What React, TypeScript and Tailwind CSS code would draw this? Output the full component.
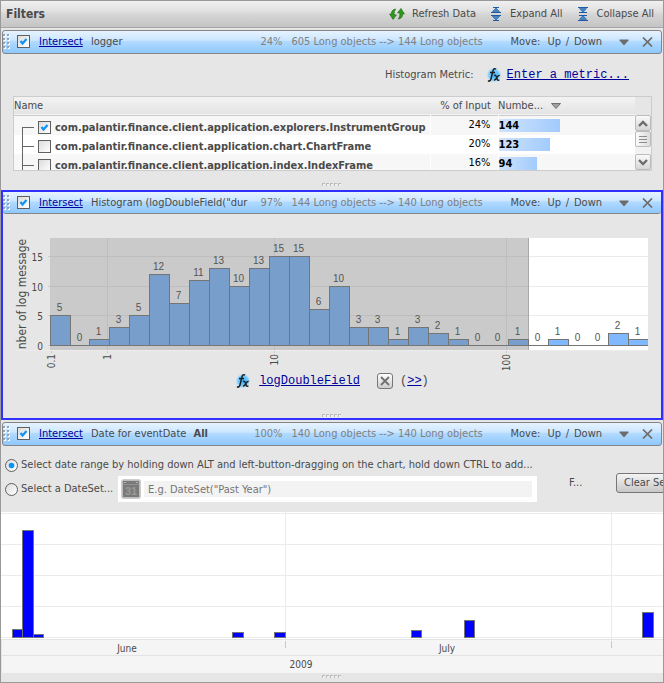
import type { ReactNode } from "react";

const LABEL_FONT = "DejaVu Sans Condensed";

function CheckBox({ label, checked = false }: { label: string; checked?: boolean }) {
  return (
    <span className="relative block size-[13px] shrink-0">
      <input
        type="checkbox"
        aria-label={label}
        defaultChecked={checked}
        className="peer block size-[13px] appearance-none border border-[#5f5f5f] bg-linear-to-br from-[#dcdcdc] to-white"
      />
      <svg
        className="pointer-events-none absolute inset-0 hidden peer-checked:block"
        width="13"
        height="13"
        viewBox="0 0 13 13"
        fill="none"
      >
        <path d="M3.5 6 L5.5 8.5 L9.5 4" stroke="#0b93f5" strokeWidth="2.2" />
      </svg>
    </span>
  );
}

function Radio({ id, checked = false }: { id: string; checked?: boolean }) {
  return (
    <span className="relative block size-[13px] shrink-0">
      <input
        id={id}
        type="radio"
        name="date-mode"
        defaultChecked={checked}
        className="peer block size-[13px] appearance-none rounded-full border border-[#5f5f5f] bg-linear-to-br from-[#dcdcdc] to-white"
      />
      <svg
        className="pointer-events-none absolute inset-0 hidden peer-checked:block"
        width="13"
        height="13"
        viewBox="0 0 13 13"
      >
        <circle cx="6.5" cy="6.5" r="2.8" fill="#0b93f5" />
      </svg>
    </span>
  );
}

function RefreshIcon() {
  return (
    <svg width="16" height="14" viewBox="0 0 16 14" className="shrink-0">
      <g fill="#2f9a1c" stroke="#17650d" strokeWidth="0.6">
        <path d="M6.6 2 Q2.4 2.6 2.4 7 L0.6 7 L4 12.4 L7.4 8 L5 7.6 Q4.8 4.6 6.6 2 Z" />
        <path d="M9.4 12 Q13.6 11.4 13.6 7 L15.4 7 L12 1.4 L8.6 5.8 L11 6.2 Q11.2 9.4 9.4 12 Z" />
      </g>
    </svg>
  );
}

function ExpandIcon() {
  return (
    <svg width="12" height="14" viewBox="0 0 12 14" className="shrink-0">
      <g fill="#3c8ad6" stroke="#1d4f94" strokeWidth="0.6">
        <path d="M6 1 L9.5 4.6 H2.5 Z" />
        <path d="M6 13 L9.5 9.4 H2.5 Z" />
      </g>
      <path d="M3 0.5 H9 M1 5.5 H11 M1 8.5 H11 M3 13.5 H9" stroke="#1f5aa6" strokeWidth="1" />
    </svg>
  );
}

function CollapseIcon() {
  return (
    <svg width="12" height="14" viewBox="0 0 12 14" className="shrink-0">
      <g fill="#3c8ad6" stroke="#1d4f94" strokeWidth="0.6">
        <path d="M6 5.4 L9.5 1.6 H2.5 Z" />
        <path d="M6 8.6 L9.5 12.4 H2.5 Z" />
      </g>
      <path d="M1 0.5 H11 M2 5.5 H10 M2 8.5 H10 M1 13.5 H11" stroke="#1f5aa6" strokeWidth="1" />
    </svg>
  );
}

function FxIcon() {
  return (
    <svg width="16" height="16" viewBox="0 0 16 16" className="shrink-0">
      <defs>
        <radialGradient id="fx-glow">
          <stop offset="0" stopColor="#35b0ff" />
          <stop offset="0.65" stopColor="#7cccff" />
          <stop offset="1" stopColor="#cfe6f5" stopOpacity="0" />
        </radialGradient>
      </defs>
      <circle cx="8" cy="8" r="8" fill="url(#fx-glow)" />
      <path
        d="M10 2.3 C8.6 0.9 7.3 2 6.8 4.4 L5 12 C4.5 14 3.2 14.6 2 13.7 M4 5.6 H9"
        fill="none"
        stroke="#1d1d1d"
        strokeWidth="1.5"
      />
      <path d="M8.2 8.6 Q9.6 7.6 10.2 9.4 L11.4 12.6 Q12 14 13.4 12.8 M13.6 8.2 Q12 8.4 10.8 10.6 Q9.4 13.4 8 13" fill="none" stroke="#1d1d1d" strokeWidth="1.4" />
    </svg>
  );
}

function CalendarIcon() {
  return (
    <svg width="20" height="20" viewBox="0 0 20 20" className="shrink-0">
      <rect x="0.5" y="0.5" width="19" height="19" rx="2" fill="#bdbdbd" stroke="#cccccc" />
      <rect x="2" y="2" width="16" height="16" fill="#7a7a7a" />
      <path d="M2 5.5 H18" stroke="#929292" />
      <path d="M3 3.5 H5 M15 3.5 H17" stroke="#b5b5b5" />
      <text x="10" y="16" textAnchor="middle" fontFamily="Liberation Sans" fontWeight="bold" fontSize="11" fill="#9a9a9a">
        31
      </text>
    </svg>
  );
}

function Grip() {
  return (
    <svg width="20" height="4" viewBox="0 0 20 4" className="mx-auto block" shapeRendering="crispEdges">
      {[0, 4, 8, 12, 16].map((x) => (
        <g key={x}>
          <rect x={x + 1} y="1" width="2" height="2" fill="#f0f0f0" />
          <path d={`M${x} 3 V0 H${x + 3} V1 H${x + 1} V3 Z`} fill="#bababa" />
        </g>
      ))}
    </svg>
  );
}

function DragHandle() {
  return (
    <svg width="8" height="16" viewBox="0 0 8 16" className="shrink-0" shapeRendering="crispEdges">
      {[0, 4, 8, 12].map((y) =>
        [0, 4].map((x) => (
          <g key={`${x}-${y}`}>
            <rect x={x + 1} y={y + 1} width="2" height="2" fill="#ffffff" />
            <rect x={x} y={y} width="2" height="2" fill="#93a5b5" />
          </g>
        )),
      )}
    </svg>
  );
}

type BarProps = { title: ReactNode; name: string; percent: string; counts: string; boxed?: boolean };

function FilterBar({ title, name, percent, counts, boxed = false }: BarProps) {
  return (
    <div
      className={
        boxed
          ? "flex h-[22px] items-center rounded-b-[3px] border-b border-[#858585] bg-[linear-gradient(to_bottom,#e6f3ff_0%,#cbe6ff_42%,#b2daff_48%,#8ec8fe_100%)] pt-px pr-[8px]"
          : "mx-px flex h-6 items-center rounded-[3px] border border-[#858585] bg-[linear-gradient(to_bottom,#e6f3ff_0%,#cbe6ff_42%,#b2daff_48%,#8ec8fe_100%)] pr-[8px]"
      }
    >
      <DragHandle />
      <div className="ml-[6px] pb-[2px]">
        <CheckBox label={`Enable ${name}`} checked />
      </div>
      <a href="#mode" className="ml-[9px] w-[52px] shrink-0 text-[#00009c] underline">
        Intersect
      </a>
      <div className="min-w-0 flex-1 overflow-hidden whitespace-nowrap">{title}</div>
      <span className="w-[30px] shrink-0 text-right text-[#808080]">{percent}</span>
      <span className="ml-[9px] w-[219px] shrink-0 whitespace-nowrap text-[#808080]">{counts}</span>
      <span className="w-[37px] shrink-0">Move:</span>
      <button type="button" className="shrink-0">Up</button>
      <span className="w-[13px] shrink-0 text-center">/</span>
      <button type="button" className="w-[45px] shrink-0 text-left">Down</button>
      <button type="button" aria-label={`Options for ${name}`} className="shrink-0">
        <svg width="10" height="7" viewBox="0 0 10 7" className="block">
          <path d="M0.5 0.5 H9.5 V1.5 L5 6.5 L0.5 1.5 Z" fill="#6c6c6c" />
        </svg>
      </button>
      <button type="button" aria-label={`Remove ${name}`} className="ml-[13px] shrink-0">
        <svg width="11" height="10" viewBox="0 0 11 10" className="block">
          <path d="M1 0.5 L10 9.5 M10 0.5 L1 9.5" stroke="#6c6c6c" strokeWidth="1.7" />
        </svg>
      </button>
    </div>
  );
}

const GROUPS = [
  { name: "com.palantir.finance.client.application.explorers.InstrumentGroup", share: "24%", count: 144, width: 61, checked: true },
  { name: "com.palantir.finance.client.application.chart.ChartFrame", share: "20%", count: 123, width: 51, checked: false },
  { name: "com.palantir.finance.client.application.index.IndexFrame", share: "16%", count: 94, width: 38, checked: false },
];

function GroupTable() {
  return (
    <div className="mr-[11px] ml-3 flex h-[75px] overflow-hidden border border-[#cccccc] bg-white">
      <table className="h-[75px] min-w-0 flex-1 table-fixed self-start">
        <thead>
          <tr className="h-[18px] border-b border-[#cccccc] bg-linear-to-b from-[#f3f3f3] to-[#e4e4e4] text-left">
            <th className="p-0 font-normal">Name</th>
            <th className="w-[68px] p-0 pr-[7px] text-right font-normal whitespace-nowrap">% of Input</th>
            <th className="w-[137px] p-0 font-normal">
              <span className="flex items-center gap-2">
                Numbe...
                <svg width="10" height="6" viewBox="0 0 10 6">
                  <path d="M0.5 0.5 H9.5 L5 5.5 Z" fill="#a0a0a0" stroke="#6f6f6f" />
                </svg>
              </span>
            </th>
          </tr>
        </thead>
        <tbody>
          {GROUPS.map((g) => (
            <tr key={g.name} className="h-[19px] odd:bg-[#f7f7f7] even:bg-white">
              <td className="overflow-hidden border-r border-white p-0">
                <div className="flex h-[19px] items-center">
                  <svg width="24" height="19" viewBox="0 0 24 19" className="shrink-0" shapeRendering="crispEdges">
                    <path d={`M8.5 ${g === GROUPS[0] ? 11 : 0} V19 M8 11.5 H20`} stroke="#666666" fill="none" />
                  </svg>
                  <div className="pt-[5px]">
                    <CheckBox label={g.name} checked={g.checked} />
                  </div>
                  <span className="pt-[5px] pl-1 font-bold whitespace-nowrap">{g.name}</span>
                </div>
              </td>
              <td className="border-r border-white p-0 pr-[7px] text-right text-black">{g.share}</td>
              <td className="p-0">
                <div
                  className="h-[13px] bg-linear-to-r from-[#cfe3fb] to-[#a2cbfd] leading-[13px] font-bold text-black"
                  style={{ width: g.width }}
                >
                  {g.count}
                </div>
              </td>
            </tr>
          ))}
        </tbody>
      </table>
      <div className="flex w-4 shrink-0 flex-col bg-[#f2f2f2]">
        <div className="h-[18px] bg-[#e6e6e6]" />
        <button type="button" aria-label="Scroll up" className="flex h-4 items-center justify-center rounded-[2px] border border-[#bcbcbc] bg-linear-to-b from-[#fafafa] to-[#d6d6d6]">
          <svg width="10" height="7" viewBox="0 0 10 7" fill="none"><path d="M1 6 L5 2 L9 6" stroke="#6c6c6c" strokeWidth="2.4" /></svg>
        </button>
        <button type="button" aria-label="Scroll position" className="flex h-4 items-center justify-center rounded-[2px] border border-[#bcbcbc] bg-linear-to-r from-[#fafafa] to-[#dcdcdc]">
          <svg width="8" height="7" viewBox="0 0 8 7" shapeRendering="crispEdges"><path d="M0 0.5 H8 M0 3.5 H8 M0 6.5 H8" stroke="#8c8c8c" /></svg>
        </button>
        <div className="flex-1" />
        <button type="button" aria-label="Scroll down" className="flex h-4 items-center justify-center rounded-[2px] border border-[#bcbcbc] bg-linear-to-b from-[#fafafa] to-[#d6d6d6]">
          <svg width="10" height="7" viewBox="0 0 10 7" fill="none"><path d="M1 1 L5 5 L9 1" stroke="#6c6c6c" strokeWidth="2.4" /></svg>
        </button>
      </div>
    </div>
  );
}

const BINS = [5, 0, 1, 3, 5, 12, 7, 11, 13, 10, 13, 15, 15, 6, 10, 3, 3, 1, 3, 2, 1, 0, 0, 1, 0, 1, 0, 0, 2, 1];
const SELECTED_BINS = 24;
const PLOT_END = 650;
const binX = (i: number) => (i >= BINS.length ? PLOT_END : 50.5 + i * 20 - Math.floor((i + 12) / 14));
const countY = (v: number) => Math.round(345 - v * 5.94) + 0.5;

function Histogram() {
  return (
    <svg viewBox="3 214 658 156" className="block h-[156px] w-full" role="img" aria-label="Histogram of log messages">
      <defs>
        <clipPath id="plot"><rect x="50" y="238" width="598" height="112" /></clipPath>
      </defs>
      <rect x="50" y="238" width="598" height="112" fill="#ffffff" />
      <rect x="50" y="238" width="478" height="112" fill="#cacaca" />
      <g shapeRendering="crispEdges">
        <path d="M50 256.5 H528 M50 286.5 H528 M50 315.5 H528 M107.5 238 V350 M274.5 238 V350 M506.5 238 V350" stroke="#bebebe" />
        <path d="M528 256.5 H648 M528 286.5 H648 M528 315.5 H648" stroke="#ebebeb" />
        <path d="M48 256.5 H50 M48 286.5 H50 M48 315.5 H50 M48 345.5 H50 M51.5 350 V353 M107.5 350 V353 M274.5 350 V353 M506.5 350 V353" stroke="#cccccc" />
        <path d="M14 350.5 H648" stroke="#ececec" />
        <path d="M528.5 238 V350" stroke="#a8a8a8" />
        <g clipPath="url(#plot)" stroke="#757575">
          {BINS.map((v, i) =>
            v > 0 ? (
              <rect
                key={i}
                x={binX(i)}
                y={countY(v)}
                width={binX(i + 1) - binX(i)}
                height={345.5 - countY(v)}
                fill={i < SELECTED_BINS ? "#789fcb" : "#80b9ff"}
              />
            ) : null,
          )}
          <path d="M50 345.5 H648" />
        </g>
      </g>
      <g fontFamily="Liberation Sans" fontSize="10" fill="#555555" textAnchor="middle">
        {BINS.map((v, i) => (
          <text key={i} x={binX(i) + 9} y={countY(v) - 5}>{v}</text>
        ))}
      </g>
      <g fontFamily={LABEL_FONT} fontSize="10" fill="#4a4a4a" textAnchor="end">
        {[15, 10, 5, 0].map((v) => (
          <text key={v} x="43" y={countY(v) + 4}>{v}</text>
        ))}
      </g>
      <g fontFamily={LABEL_FONT} fontSize="10" fill="#4a4a4a" textAnchor="end">
        <text transform="translate(55 354) rotate(-90)">0.1</text>
        <text transform="translate(111 354) rotate(-90)">1</text>
        <text transform="translate(278 354) rotate(-90)">10</text>
        <text transform="translate(510 354) rotate(-90)">100</text>
      </g>
      <text transform="translate(26 294) rotate(-90)" textAnchor="middle" fontFamily={LABEL_FONT} fontSize="12" fill="#4a4a4a">
        nber of log message
      </text>
    </svg>
  );
}

const DAYS = [
  [12, 22, 629],
  [22, 33, 530],
  [33, 43, 634],
  [232, 243, 632],
  [274, 285, 632],
  [411, 421, 630],
  [464, 474, 620],
  [642, 653, 612],
];

function DateChart() {
  return (
    <svg viewBox="1 512 662 161" className="block h-[161px] w-full" role="img" aria-label="Events by date">
      <rect x="1" y="512" width="662" height="128" fill="#ffffff" />
      <rect x="1" y="640" width="662" height="33" fill="#f5f5f5" />
      <g shapeRendering="crispEdges">
        <path d="M1 513.5 H663 M1 544.5 H663 M1 575.5 H663 M1 606.5 H663 M1 637.5 H663 M285.5 512 V639 M611.5 512 V639" stroke="#ebebeb" />
        <path d="M1 639.5 H663 M1 655.5 H663 M1.5 640 V673" stroke="#e4e4e4" />
        <path d="M285.5 641 V648 M611.5 641 V648" stroke="#c8c8c8" />
        {DAYS.map(([x1, x2, y]) => (
          <rect key={x1} x={x1 + 0.5} y={y + 0.5} width={x2 - x1} height={637 - y} fill="#0000ff" stroke="#757575" />
        ))}
      </g>
      <g fontFamily={LABEL_FONT} fontSize="10" fill="#4a4a4a" textAnchor="middle">
        <text x="127" y="652">June</text>
        <text x="447" y="652">July</text>
        <text x="301" y="668">2009</text>
      </g>
    </svg>
  );
}

export default function App() {
  return (
    <main className="border border-[#999999] bg-[#e6e6e6] font-['DejaVu_Sans_Condensed','DejaVu_Sans',sans-serif] text-[11px] leading-[14px] text-[#4a4a4a]">
      <header className="flex h-[27px] items-center border-b border-[#a6a6a6] bg-[linear-gradient(to_bottom,#f0f0f0_0%,#e0e0e0_40%,#d6d6d6_50%,#c4c4c4_100%)] pr-[9px] pl-[5px]">
        <h1 className="flex-1 text-xs font-bold">Filters</h1>
        <button type="button" className="flex items-center gap-[7px]">
          <RefreshIcon />
          Refresh Data
        </button>
        <button type="button" className="ml-[14px] flex items-center gap-2">
          <ExpandIcon />
          Expand All
        </button>
        <button type="button" className="ml-[14px] flex items-center gap-2">
          <CollapseIcon />
          Collapse All
        </button>
      </header>

      <section className="pt-[2px]">
        <FilterBar title="logger" name="logger" percent="24%" counts="605 Long objects --> 144 Long objects" />
        <div className="flex h-[42px] items-center justify-end pr-[34px]">
          <span>Histogram Metric:</span>
          <span className="mr-[5px] ml-3"><FxIcon /></span>
          <a href="#metric" className="font-['Liberation_Mono',monospace] text-xs text-[#00009c] underline">Enter a metric...</a>
        </div>
        <GroupTable />
        <div className="pt-[12px] pb-[3px]"><Grip /></div>
      </section>

      <section className="border-2 border-[#3030ff]">
        <FilterBar
          title={'Histogram (logDoubleField("dur'}
          name="histogram"
          percent="97%"
          counts="144 Long objects --> 140 Long objects"
          boxed
        />
        <Histogram />
        <div className="flex h-[22px] items-center justify-center">
          <FxIcon />
          <a href="#field" className="ml-2 font-['Liberation_Mono',monospace] text-xs text-[#00009c] underline">logDoubleField</a>
          <button type="button" aria-label="Clear field" className="mr-[7px] ml-[17px] flex size-4 items-center justify-center rounded-[3px] border border-[#777777] bg-linear-to-b from-white to-[#cccccc]">
            <svg width="10" height="10" viewBox="0 0 10 10"><path d="M1 1 L9 9 M9 1 L1 9" stroke="#707070" strokeWidth="1.8" /></svg>
          </button>
          <span className="font-['Liberation_Mono',monospace] text-xs">
            (<a href="#more" className="text-[#00009c] underline">&gt;&gt;</a>)
          </span>
        </div>
        <div className="pt-[22px]"><Grip /></div>
      </section>

      <section className="pt-[2px]">
        <FilterBar
          title={<>Date for eventDate <b className="ml-1">All</b></>}
          name="event date"
          percent="100%"
          counts="140 Long objects --> 140 Long objects"
        />
        <div className="flex h-[66px] justify-between overflow-hidden">
          <div className="flex min-w-0 flex-col gap-1 pt-[12px] pl-1">
            <div className="flex items-center gap-[3px]">
              <Radio id="by-range" checked />
              <label htmlFor="by-range" className="whitespace-nowrap">
                Select date range by holding down ALT and left-button-dragging on the chart, hold down CTRL to add...
              </label>
            </div>
            <div className="flex items-center">
              <Radio id="by-set" />
              <label htmlFor="by-set" className="w-[100px] shrink-0 pl-[3px] whitespace-nowrap">Select a DateSet...</label>
              <div className="flex h-[26px] w-[419px] items-center gap-[3px] bg-white pr-[5px] pl-[3px]">
                <CalendarIcon />
                <input
                  type="text"
                  aria-label="DateSet expression"
                  placeholder={'E.g. DateSet("Past Year")'}
                  className="h-4 min-w-0 flex-1 bg-[#f3f3f3] px-1 outline-none placeholder:text-[#757575]"
                />
              </div>
            </div>
          </div>
          <div className="flex w-[94px] shrink-0 items-center pt-[8px]">
            <span className="w-[47px] shrink-0">F...</span>
            <button type="button" className="h-5 w-[96px] shrink-0 rounded-[3px] border border-[#777777] bg-linear-to-b from-[#f4f4f4] to-[#c8c8c8] pl-[7px] text-left whitespace-nowrap">
              Clear Selection
            </button>
          </div>
        </div>
        <DateChart />
        <div className="pt-[2px] pb-[3px]"><Grip /></div>
      </section>
    </main>
  );
}
